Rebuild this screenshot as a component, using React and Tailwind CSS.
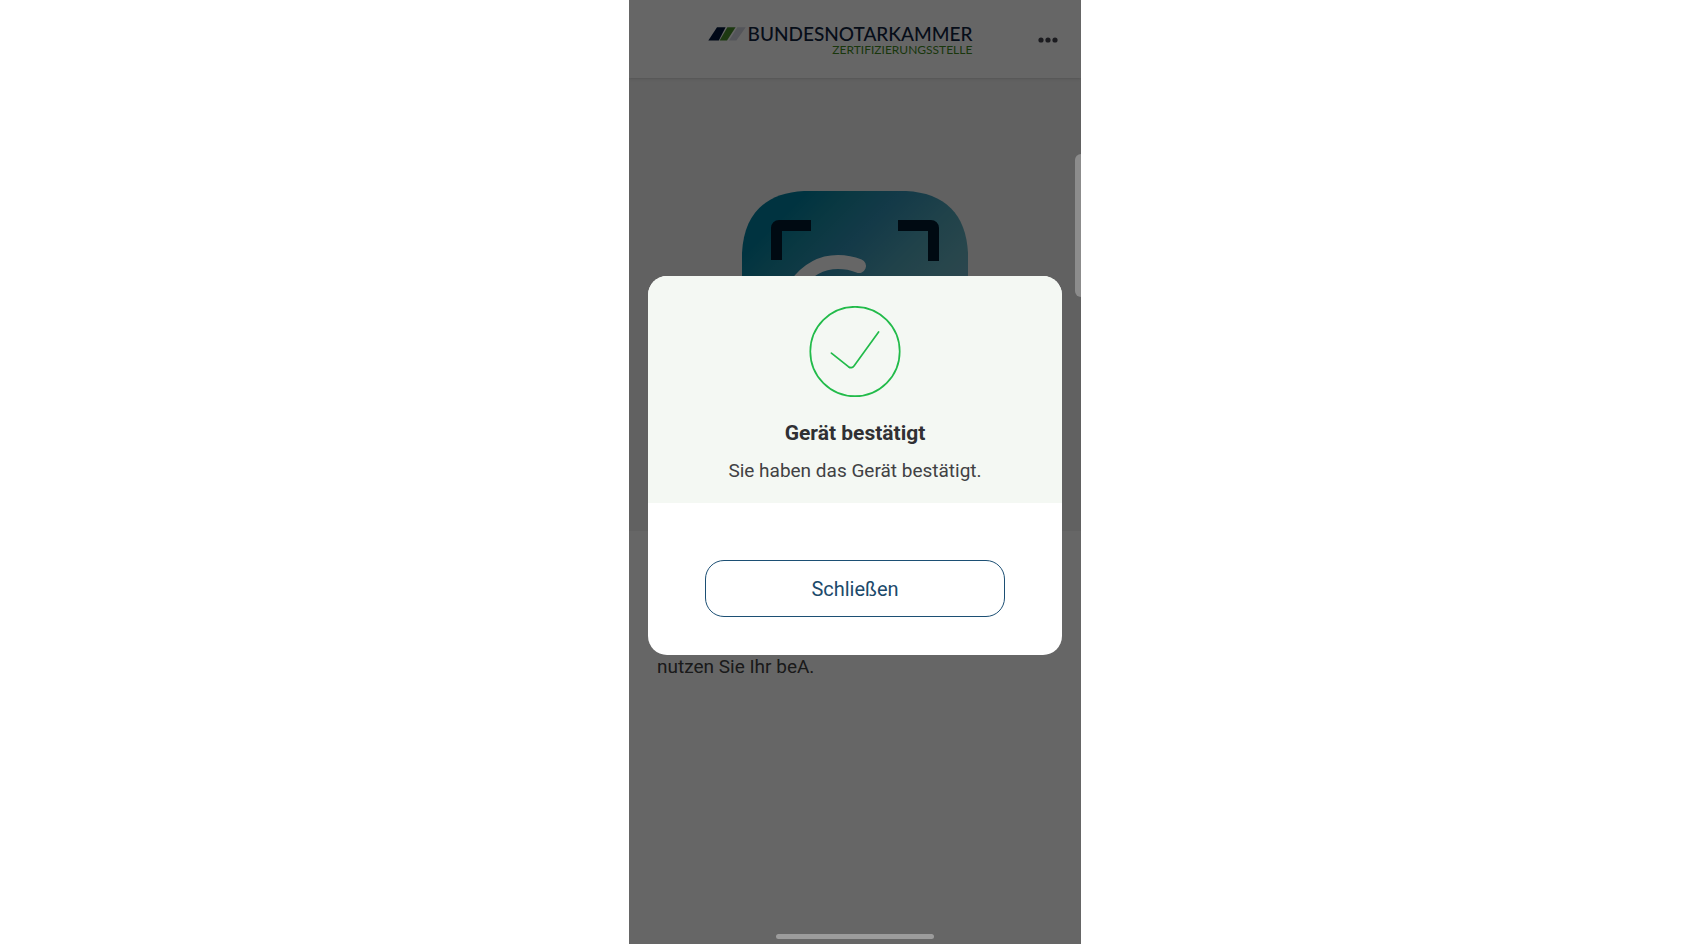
import React, { useState } from 'react';

const Logo = () => (
  <div className="flex flex-col items-end">
    <div className="flex items-center gap-0.5">
      <svg width="38" height="14" viewBox="0 0 38 14" aria-hidden="true">
        <path d="M9 0.3h8.6L10.8 13.5H0.3z" fill="#00163a" />
        <path d="M19.4 0.3h8.2L19 13.5H11.6z" fill="#4a8f2c" />
        <path d="M29.4 0.3h8.3L28.4 13.5H21z" fill="#d2d5e0" />
      </svg>
      <span className="text-[19px] leading-5 font-medium text-[#10233f]">BUNDESNOTARKAMMER</span>
    </div>
    <span className="text-xs leading-3 text-[#3f8a1f]">ZERTIFIZIERUNGSSTELLE</span>
  </div>
);

const Header = () => (
  <header className="relative flex h-[78px] items-center justify-center bg-white pt-0.5 pr-[30px] font-[Lato,sans-serif] shadow-sm">
    <Logo />
    <button type="button" aria-label="Menü" className="absolute right-[21px] flex h-8 w-6 items-center justify-center">
      <svg width="20" height="6" viewBox="0 0 20 6" fill="#45454f" aria-hidden="true">
        <circle cx="3" cy="3" r="2.6" />
        <circle cx="10" cy="3" r="2.6" />
        <circle cx="17" cy="3" r="2.6" />
      </svg>
    </button>
  </header>
);

const AppIcon = () => (
  <svg width="226" height="226" viewBox="0 0 226 226" aria-hidden="true">
    <defs>
      <linearGradient id="tile" x1="0" y1="0" x2="1" y2="1">
        <stop offset="0.14" stopColor="#0080a0" />
        <stop offset="0.24" stopColor="#198ca5" />
        <stop offset="0.36" stopColor="#3291b4" />
        <stop offset="0.5" stopColor="#50a5b9" />
        <stop offset="0.62" stopColor="#64afbe" />
        <stop offset="0.75" stopColor="#78afc8" />
      </linearGradient>
    </defs>
    <path
      d="M62 0H164C203 2 224 23 226 62V164C224 203 203 224 164 226H62C23 224 2 203 0 164V62C2 23 23 2 62 0z"
      fill="url(#tile)"
    />
    <g fill="#00192d">
      <path d="M29 69V37a8 8 0 0 1 8-8H69V40H40V69z" />
      <path d="M197 70V37a8 8 0 0 0-8-8H156V40H186V70z" />
    </g>
    <path d="M54 94Q71 71 96 71Q107 71 117 75" fill="none" stroke="#fff" strokeWidth="14" strokeLinecap="round" />
  </svg>
);

const CheckIcon = () => (
  <svg width="92" height="92" viewBox="0 0 92 92" fill="none" stroke="#22bb4a" strokeWidth="1.7" aria-hidden="true">
    <circle cx="46" cy="45.5" r="44.7" />
    <path d="M22.4 47.1L39.4 60.7Q42.6 63.1 45 59.9L69.6 25.9" strokeLinecap="round" />
  </svg>
);

const ConfirmDialog = ({ onClose }) => (
  <div className="absolute inset-0 bg-black/60 px-[19px] pt-[276px]">
    <div
      role="dialog"
      aria-modal="true"
      aria-labelledby="dialog-title"
      className="overflow-hidden rounded-[19px] bg-white text-center"
    >
      <div className="flex flex-col items-center bg-[#f4f8f3] px-6 pt-[30px] pb-[18px]">
        <CheckIcon />
        <h2 id="dialog-title" className="mt-[21px] text-[21px] leading-7 font-bold text-[#303033]">
          Gerät bestätigt
        </h2>
        <p className="mt-2.5 text-[19px] leading-7 text-[#414143]">Sie haben das Gerät bestätigt.</p>
      </div>
      <div className="px-[57px] pt-[57px] pb-[38px]">
        <button
          type="button"
          onClick={onClose}
          className="h-[57px] w-full rounded-[19px] border border-[#1c4f74] text-xl text-[#1c4a6b]"
        >
          Schließen
        </button>
      </div>
    </div>
  </div>
);

const App = () => {
  const [open, setOpen] = useState(true);

  return (
    <div className="flex min-h-screen justify-center bg-white pl-2 font-[Roboto,sans-serif]">
      <div className="relative w-full max-w-[452px] overflow-hidden bg-white">
        <Header />

        <main>
          <section className="flex justify-center bg-[#f2f2f2] pt-[113px] pb-[114px]">
            <AppIcon />
          </section>
          <p className="px-7 pt-[122px] text-[19px] leading-7 text-[#414143]">nutzen Sie Ihr beA.</p>
        </main>

        {open && <ConfirmDialog onClose={() => setOpen(false)} />}

        {/* System edge panel handle and gesture bar */}
        <div className="absolute top-[154px] right-0 h-[143px] w-1.5 rounded-l-md bg-[#8c8c8c]" />
        <div className="absolute inset-x-0 bottom-[5px] mx-auto h-[5px] w-[158px] rounded-full bg-[#9c9c9c]" />
      </div>
    </div>
  );
};

export default App;
